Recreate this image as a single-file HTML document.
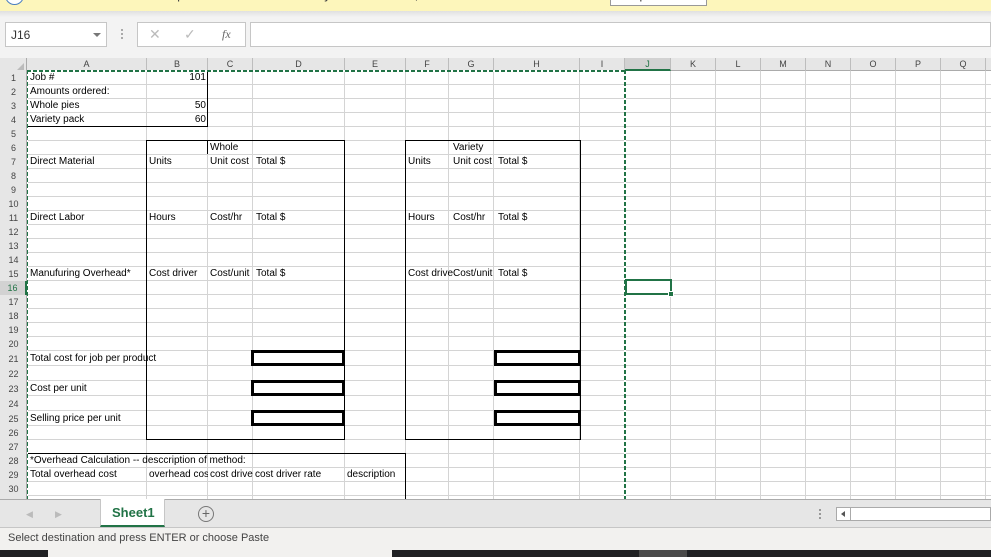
<!DOCTYPE html>
<html><head><meta charset="utf-8"><style>
*{margin:0;padding:0;box-sizing:border-box}
body{width:991px;height:557px;overflow:hidden;background:#fff;position:relative;font-family:"Liberation Sans",sans-serif}
.a{position:absolute}
.t{position:absolute;font-size:10px;color:#000;white-space:nowrap;line-height:14px}
.h{position:absolute;height:1px;background:#d4d4d4}
.v{position:absolute;width:1px;background:#d4d4d4}
.rl{position:absolute;left:0;width:27px;text-align:center;font-size:9px;color:#444;line-height:14px}
.cl{position:absolute;top:58px;height:13px;text-align:center;font-size:9px;color:#444;line-height:13px;border-right:1px solid #bdbdbd}
.tb{position:absolute;border:3px solid #000}
</style></head><body>
<!-- top message bar -->
<div class="a" style="left:0;top:0;width:991px;height:11px;background:#fdf6bb"></div>
<div class="a" style="left:5px;top:-14px;width:19px;height:19px;border:1.5px solid #4a7ec0;border-radius:50%;background:#fff"></div>
<div class="t" style="left:29px;top:-13px;font-size:13px;line-height:16px;color:#444">UPDATES AVAILABLE &nbsp;Updates for Office are ready to be installed, but first we need to close some apps.</div>
<div class="a" style="left:610px;top:-12px;width:97px;height:18px;border:1px solid #999;background:#fff"></div>
<div class="t" style="left:630px;top:-13px;font-size:13px;line-height:16px;color:#444">Update now</div>
<div class="a" style="left:0;top:11px;width:991px;height:47px;background:#f3f3f3"></div>
<div class="a" style="left:0;top:11px;width:991px;height:6px;background:linear-gradient(#e0e0e0,#f3f3f3)"></div>
<!-- name box -->
<div class="a" style="left:5px;top:22px;width:102px;height:25px;background:#fff;border:1px solid #c6c6c6"></div>
<div class="t" style="left:11px;top:28px;font-size:12px;color:#333">J16</div>
<div class="a" style="left:93px;top:33px;width:0;height:0;border-left:4px solid transparent;border-right:4px solid transparent;border-top:4px solid #777"></div>
<div class="a" style="left:121px;top:29px;width:2px;height:2px;background:#aaa;box-shadow:0 4px 0 #aaa,0 8px 0 #aaa"></div>
<div class="a" style="left:137px;top:22px;width:109px;height:25px;background:#fff;border:1px solid #c6c6c6"></div>
<div class="t" style="left:149px;top:27px;font-size:14px;color:#bbb">✕</div>
<div class="t" style="left:184px;top:27px;font-size:14px;color:#bbb">✓</div>
<div class="t" style="left:222px;top:27px;font-size:12px;color:#666;font-style:italic;font-family:'Liberation Serif',serif">fx</div>
<div class="a" style="left:250px;top:22px;width:741px;height:25px;background:#fff;border:1px solid #c6c6c6"></div>
<!-- headers -->
<div class="a" style="left:0;top:58px;width:991px;height:13px;background:#e6e6e6;border-bottom:1px solid #ababab"></div>
<div class="a" style="left:0;top:58px;width:27px;height:441px;background:#e6e6e6;border-right:1px solid #ababab"></div>
<div class="a" style="left:17px;top:63px;width:0;height:0;border-left:7px solid transparent;border-bottom:7px solid #bbb"></div>
<div class="cl" style="left:27px;width:120px">A</div>
<div class="cl" style="left:147px;width:61px">B</div>
<div class="cl" style="left:208px;width:45px">C</div>
<div class="cl" style="left:253px;width:92px">D</div>
<div class="cl" style="left:345px;width:61px">E</div>
<div class="cl" style="left:406px;width:43px">F</div>
<div class="cl" style="left:449px;width:45px">G</div>
<div class="cl" style="left:494px;width:86px">H</div>
<div class="cl" style="left:580px;width:45px">I</div>
<div class="cl" style="left:625px;width:46px;background:#d2d2d2;color:#217346;border-bottom:2px solid #217346;height:13px">J</div>
<div class="cl" style="left:671px;width:45px">K</div>
<div class="cl" style="left:716px;width:45px">L</div>
<div class="cl" style="left:761px;width:45px">M</div>
<div class="cl" style="left:806px;width:45px">N</div>
<div class="cl" style="left:851px;width:45px">O</div>
<div class="cl" style="left:896px;width:45px">P</div>
<div class="cl" style="left:941px;width:45px">Q</div>
<!-- vertical gridlines -->
<div class="v" style="left:146px;top:71px;height:428px"></div>
<div class="v" style="left:207px;top:71px;height:428px"></div>
<div class="v" style="left:252px;top:71px;height:428px"></div>
<div class="v" style="left:344px;top:71px;height:428px"></div>
<div class="v" style="left:405px;top:71px;height:428px"></div>
<div class="v" style="left:448px;top:71px;height:428px"></div>
<div class="v" style="left:493px;top:71px;height:428px"></div>
<div class="v" style="left:579px;top:71px;height:428px"></div>
<div class="v" style="left:624px;top:71px;height:428px"></div>
<div class="v" style="left:670px;top:71px;height:428px"></div>
<div class="v" style="left:715px;top:71px;height:428px"></div>
<div class="v" style="left:760px;top:71px;height:428px"></div>
<div class="v" style="left:805px;top:71px;height:428px"></div>
<div class="v" style="left:850px;top:71px;height:428px"></div>
<div class="v" style="left:895px;top:71px;height:428px"></div>
<div class="v" style="left:940px;top:71px;height:428px"></div>
<div class="v" style="left:985px;top:71px;height:428px"></div>
<!-- horizontal gridlines -->
<div class="h" style="left:27px;width:964px;top:84px"></div><div class="h" style="left:27px;width:964px;top:98px"></div><div class="h" style="left:27px;width:964px;top:112px"></div><div class="h" style="left:27px;width:964px;top:126px"></div><div class="h" style="left:27px;width:964px;top:140px"></div><div class="h" style="left:27px;width:964px;top:154px"></div><div class="h" style="left:27px;width:964px;top:168px"></div><div class="h" style="left:27px;width:964px;top:182px"></div><div class="h" style="left:27px;width:964px;top:196px"></div><div class="h" style="left:27px;width:964px;top:210px"></div><div class="h" style="left:27px;width:964px;top:224px"></div><div class="h" style="left:27px;width:964px;top:238px"></div><div class="h" style="left:27px;width:964px;top:252px"></div><div class="h" style="left:27px;width:964px;top:266px"></div><div class="h" style="left:27px;width:964px;top:280px"></div><div class="h" style="left:27px;width:964px;top:294px"></div><div class="h" style="left:27px;width:964px;top:308px"></div><div class="h" style="left:27px;width:964px;top:322px"></div><div class="h" style="left:27px;width:964px;top:336px"></div><div class="h" style="left:27px;width:964px;top:350px"></div><div class="h" style="left:27px;width:964px;top:365px"></div><div class="h" style="left:27px;width:964px;top:380px"></div><div class="h" style="left:27px;width:964px;top:395px"></div><div class="h" style="left:27px;width:964px;top:410px"></div><div class="h" style="left:27px;width:964px;top:425px"></div><div class="h" style="left:27px;width:964px;top:439px"></div><div class="h" style="left:27px;width:964px;top:453px"></div><div class="h" style="left:27px;width:964px;top:467px"></div><div class="h" style="left:27px;width:964px;top:481px"></div><div class="h" style="left:27px;width:964px;top:495px"></div>
<!-- row labels -->
<div class="rl" style="top:71px">1</div><div class="rl" style="top:85px">2</div><div class="rl" style="top:99px">3</div><div class="rl" style="top:113px">4</div><div class="rl" style="top:127px">5</div><div class="rl" style="top:141px">6</div><div class="rl" style="top:155px">7</div><div class="rl" style="top:169px">8</div><div class="rl" style="top:183px">9</div><div class="rl" style="top:197px">10</div><div class="rl" style="top:211px">11</div><div class="rl" style="top:225px">12</div><div class="rl" style="top:239px">13</div><div class="rl" style="top:253px">14</div><div class="rl" style="top:267px">15</div>
<div class="rl" style="top:281px;background:#d2d2d2;color:#217346;border-right:2px solid #217346">16</div>
<div class="rl" style="top:295px">17</div><div class="rl" style="top:309px">18</div><div class="rl" style="top:323px">19</div><div class="rl" style="top:337px">20</div><div class="rl" style="top:352px">21</div><div class="rl" style="top:367px">22</div><div class="rl" style="top:382px">23</div><div class="rl" style="top:397px">24</div><div class="rl" style="top:412px">25</div><div class="rl" style="top:426px">26</div><div class="rl" style="top:440px">27</div><div class="rl" style="top:454px">28</div><div class="rl" style="top:468px">29</div><div class="rl" style="top:482px">30</div>
<!-- borders -->
<div class="a" style="left:27px;top:71px;width:181px;height:56px;border:1px solid #000;border-top:none;border-left:none"></div>
<div class="a" style="left:146px;top:140px;width:199px;height:300px;border:1px solid #000"></div>
<div class="a" style="left:207px;top:140px;width:1px;height:14px;background:#000"></div>
<div class="a" style="left:405px;top:140px;width:176px;height:300px;border:1px solid #000"></div>
<div class="a" style="left:27px;top:453px;width:379px;height:46px;border:1px solid #000;border-bottom:none;border-left:none"></div>
<div class="tb" style="left:251px;top:350px;width:94px;height:16px"></div>
<div class="tb" style="left:251px;top:380px;width:94px;height:16px"></div>
<div class="tb" style="left:251px;top:410px;width:94px;height:16px"></div>
<div class="tb" style="left:494px;top:350px;width:87px;height:16px"></div>
<div class="tb" style="left:494px;top:380px;width:87px;height:16px"></div>
<div class="tb" style="left:494px;top:410px;width:87px;height:16px"></div>
<!-- marching ants -->
<div class="a" style="left:27px;top:70px;width:599px;height:2px;background:repeating-linear-gradient(90deg,#217346 0 4px,#fff 4px 6px)"></div>
<div class="a" style="left:624px;top:70px;width:2px;height:429px;background:repeating-linear-gradient(180deg,#217346 0 4px,#fff 4px 6px)"></div>
<div class="a" style="left:27px;top:70px;width:1px;height:429px;background:repeating-linear-gradient(180deg,#217346 0 4px,#fff 4px 6px)"></div>
<!-- selection J16 -->
<div class="a" style="left:625px;top:279px;width:47px;height:16px;border:2px solid #217346"></div>
<div class="a" style="left:668px;top:291px;width:6px;height:6px;background:#217346;border:1px solid #fff"></div>
<!-- text -->
<div class="t" style="left:30px;top:71px">Job #</div>
<div class="t" style="left:150px;top:71px;width:56px;text-align:right">101</div>
<div class="t" style="left:30px;top:85px">Amounts ordered:</div>
<div class="t" style="left:30px;top:99px">Whole pies</div>
<div class="t" style="left:150px;top:99px;width:56px;text-align:right">50</div>
<div class="t" style="left:30px;top:113px">Variety pack</div>
<div class="t" style="left:150px;top:113px;width:56px;text-align:right">60</div>
<div class="t" style="left:210px;top:141px">Whole</div>
<div class="t" style="left:453px;top:141px">Variety</div>
<div class="t" style="left:30px;top:155px">Direct Material</div>
<div class="t" style="left:149px;top:155px">Units</div><div class="t" style="left:210px;top:155px">Unit cost</div><div class="t" style="left:256px;top:155px">Total $</div>
<div class="t" style="left:408px;top:155px">Units</div><div class="t" style="left:453px;top:155px">Unit cost</div><div class="t" style="left:498px;top:155px">Total $</div>
<div class="t" style="left:30px;top:211px">Direct Labor</div>
<div class="t" style="left:149px;top:211px">Hours</div><div class="t" style="left:210px;top:211px">Cost/hr</div><div class="t" style="left:256px;top:211px">Total $</div>
<div class="t" style="left:408px;top:211px">Hours</div><div class="t" style="left:453px;top:211px">Cost/hr</div><div class="t" style="left:498px;top:211px">Total $</div>
<div class="t" style="left:30px;top:267px">Manufuring Overhead*</div>
<div class="t" style="left:149px;top:267px">Cost driver</div><div class="t" style="left:210px;top:267px">Cost/unit</div><div class="t" style="left:256px;top:267px">Total $</div>
<div class="t" style="left:408px;top:267px;width:45px;overflow:hidden">Cost driver</div><div class="t" style="left:453px;top:267px">Cost/unit</div><div class="t" style="left:498px;top:267px">Total $</div>
<div class="t" style="left:30px;top:352px">Total cost for job per product</div>
<div class="t" style="left:30px;top:382px">Cost per unit</div>
<div class="t" style="left:30px;top:412px">Selling price per unit</div>
<div class="t" style="left:30px;top:454px">*Overhead Calculation -- desccription of method:</div>
<div class="t" style="left:30px;top:468px">Total overhead cost</div>
<div class="t" style="left:149px;top:468px;width:59px;overflow:hidden">overhead cost</div>
<div class="t" style="left:210px;top:468px;width:43px;overflow:hidden">cost driver</div>
<div class="t" style="left:255px;top:468px">cost driver rate</div>
<div class="t" style="left:347px;top:468px">description</div>
<!-- tab bar -->
<div class="a" style="left:0;top:499px;width:991px;height:29px;background:#e6e6e6;border-top:1px solid #ababab;border-bottom:1px solid #c6c6c6"></div>
<div class="t" style="left:26px;top:507px;font-size:9px;color:#bbb">◀</div>
<div class="t" style="left:55px;top:507px;font-size:9px;color:#bbb">▶</div>
<div class="a" style="left:100px;top:499px;width:65px;height:28px;background:#fff;border-bottom:2px solid #217346;border-left:1px solid #c6c6c6;border-right:1px solid #c6c6c6"></div>
<div class="t" style="left:112px;top:506px;font-size:13px;font-weight:bold;color:#217346">Sheet1</div>
<div class="a" style="left:198px;top:506px;width:16px;height:16px;border:1.5px solid #777;border-radius:50%;text-align:center;line-height:12px;font-size:14px;color:#666">+</div>
<div class="a" style="left:819px;top:509px;width:2px;height:2px;background:#999;box-shadow:0 4px 0 #999,0 8px 0 #999"></div>
<div class="a" style="left:836px;top:507px;width:155px;height:14px;background:#fff;border:1px solid #aaa"></div>
<div class="a" style="left:850px;top:507px;width:1px;height:14px;background:#aaa"></div>
<div class="a" style="left:841px;top:511px;width:0;height:0;border-top:3px solid transparent;border-bottom:3px solid transparent;border-right:4px solid #555"></div>
<!-- status bar -->
<div class="a" style="left:0;top:528px;width:991px;height:29px;background:#f2f1ef"></div>
<div class="t" style="left:8px;top:531px;font-size:11px;color:#444;line-height:14px">Select destination and press ENTER or choose Paste</div>
<div class="a" style="left:0;top:550px;width:48px;height:7px;background:#202124"></div>
<div class="a" style="left:392px;top:550px;width:599px;height:7px;background:#202124"></div>
<div class="a" style="left:639px;top:550px;width:48px;height:7px;background:#4a4a4a"></div>
</body></html>
